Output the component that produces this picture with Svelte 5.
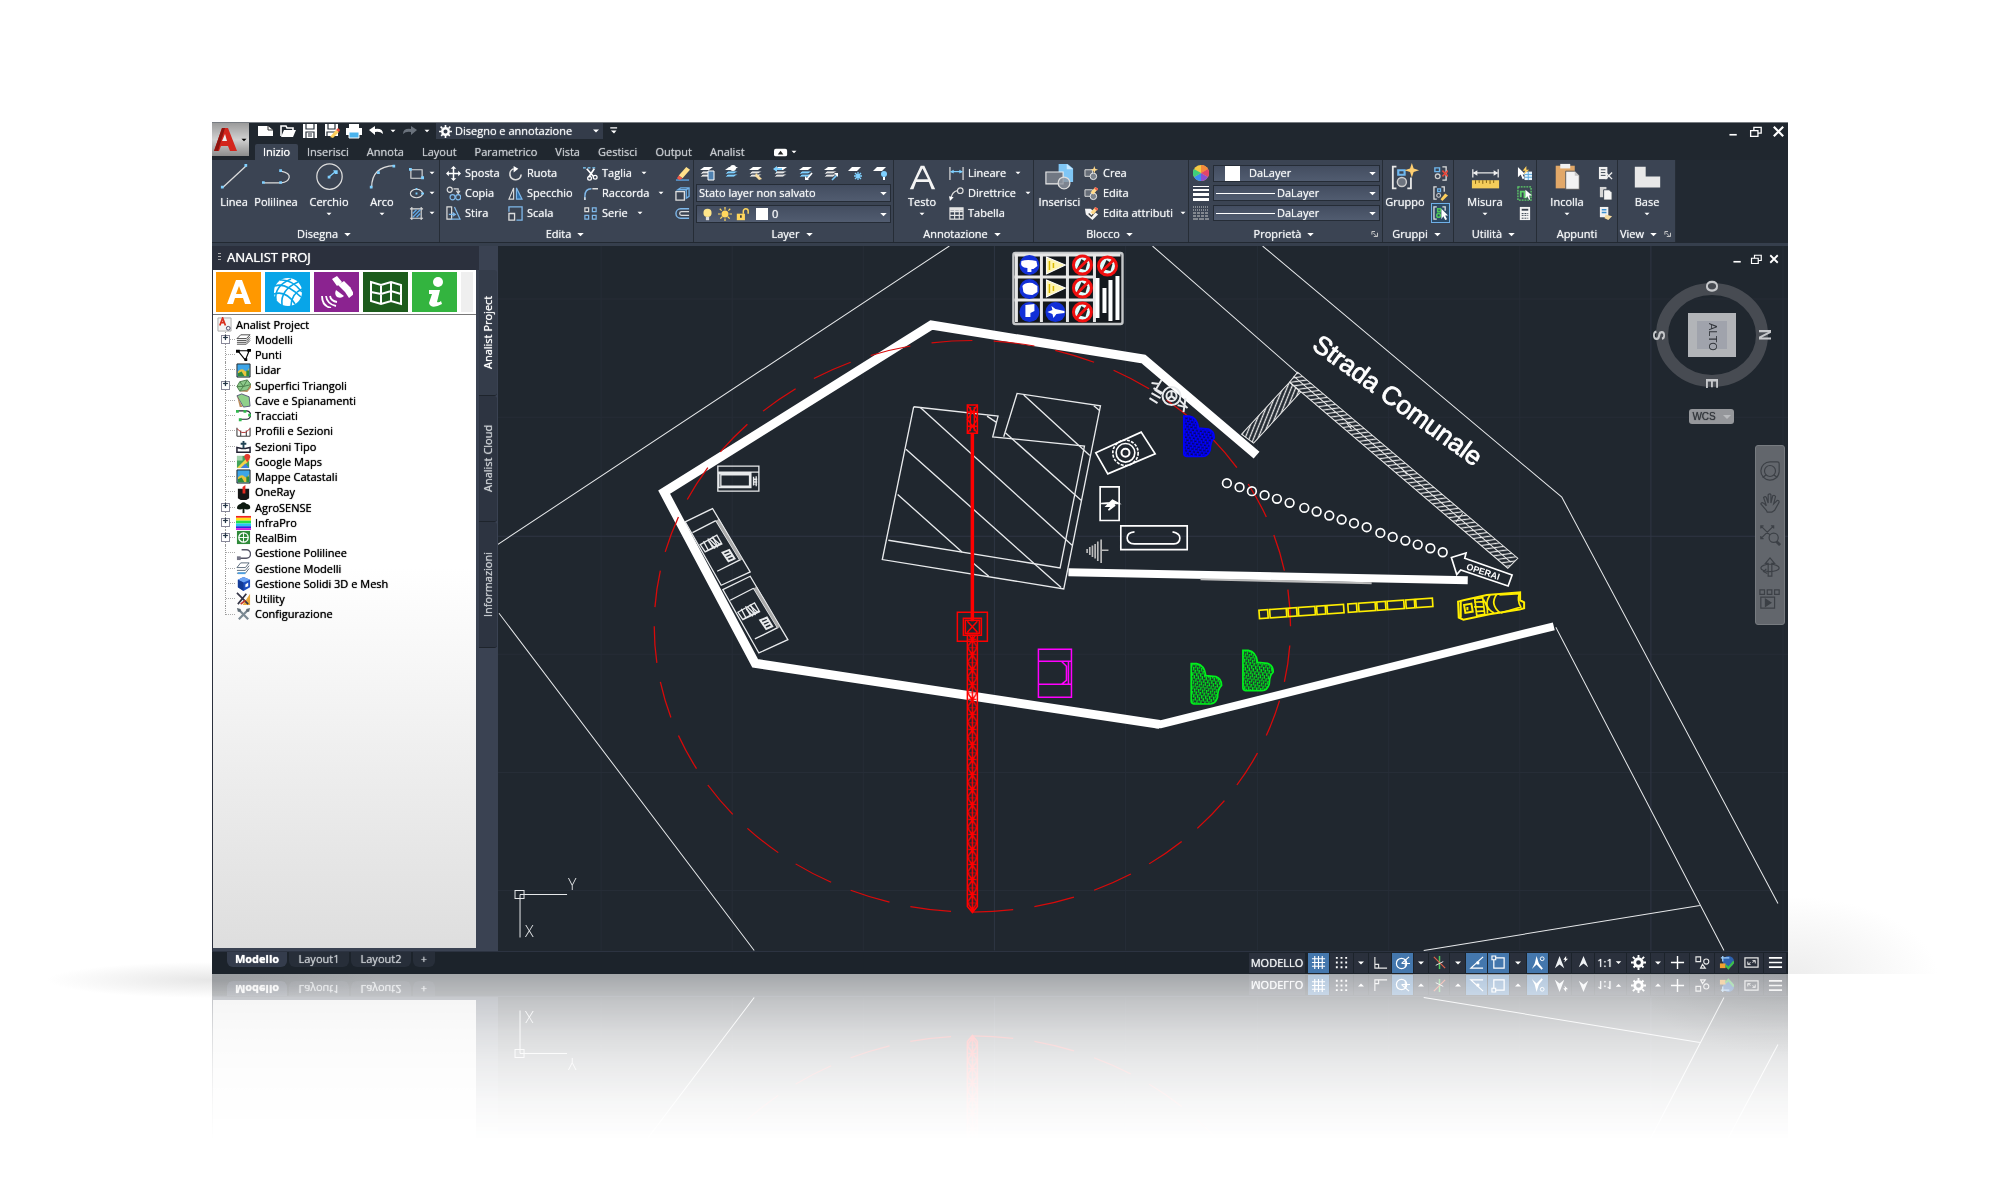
<script lang="ts">
	type Item = { icon: string; label: string; arrow?: boolean };

	const tabs = ['Inizio', 'Inserisci', 'Annota', 'Layout', 'Parametrico', 'Vista', 'Gestisci', 'Output', 'Analist'];

	const quick = ['new', 'open', 'save', 'saveas', 'print', 'undo', 'caret', 'redo', 'caret'];

	const edit: Item[] = [
		{ icon: 'move', label: 'Sposta' },
		{ icon: 'rotate', label: 'Ruota' },
		{ icon: 'trim', label: 'Taglia', arrow: true },
		{ icon: 'erase', label: '' },
		{ icon: 'copy', label: 'Copia' },
		{ icon: 'mirror', label: 'Specchio' },
		{ icon: 'fillet', label: 'Raccorda', arrow: true },
		{ icon: 'explode', label: '' },
		{ icon: 'stretch', label: 'Stira' },
		{ icon: 'scale', label: 'Scala' },
		{ icon: 'array', label: 'Serie', arrow: true },
		{ icon: 'offset', label: '' }
	];

	const annotation: Item[] = [
		{ icon: 'linear', label: 'Lineare', arrow: true },
		{ icon: 'leader', label: 'Direttrice', arrow: true },
		{ icon: 'table', label: 'Tabella' }
	];

	const block: Item[] = [
		{ icon: 'blockNew', label: 'Crea' },
		{ icon: 'blockEdit', label: 'Edita' },
		{ icon: 'blockAttr', label: 'Edita attributi', arrow: true }
	];

	const layerTools = ['layProps', 'layIso', 'layBrush', 'layPrev', 'layA', 'layB', 'layFreeze', 'layOff'];

	const tree = [
		{ icon: 'tModels', label: 'Modelli', plus: true },
		{ icon: 'tPoints', label: 'Punti' },
		{ icon: 'tImage', label: 'Lidar' },
		{ icon: 'tSurface', label: 'Superfici Triangoli', plus: true },
		{ icon: 'tQuarry', label: 'Cave e Spianamenti' },
		{ icon: 'tTrack', label: 'Tracciati' },
		{ icon: 'tProfile', label: 'Profili e Sezioni' },
		{ icon: 'tSection', label: 'Sezioni Tipo' },
		{ icon: 'tMaps', label: 'Google Maps' },
		{ icon: 'tImage', label: 'Mappe Catastali' },
		{ icon: 'tOne', label: 'OneRay' },
		{ icon: 'tTree', label: 'AgroSENSE', plus: true },
		{ icon: 'tInfra', label: 'InfraPro', plus: true },
		{ icon: 'tBim', label: 'RealBim', plus: true },
		{ icon: 'tPoly', label: 'Gestione Polilinee' },
		{ icon: 'tModels2', label: 'Gestione Modelli' },
		{ icon: 'tSolid', label: 'Gestione Solidi 3D e Mesh' },
		{ icon: 'tTools', label: 'Utility' },
		{ icon: 'tConfig', label: 'Configurazione' }
	];

	const paletteTools = [
		{ icon: 'pA', label: 'Analist', tone: 'orange' },
		{ icon: 'pGlobe', label: 'Globo', tone: 'sky' },
		{ icon: 'pSat', label: 'GPS', tone: 'purple' },
		{ icon: 'pMap', label: 'Mappa', tone: 'forest' },
		{ icon: 'pInfo', label: 'Info', tone: 'green' }
	];

	// width in px of each status bar button, "on" marks the lit ones
	const status = [
		{ icon: 'sGrid', w: 21, on: true },
		{ icon: 'sDots', w: 23 },
		{ icon: 'caret', w: 14 },
		{ icon: 'sOrtho', w: 22 },
		{ icon: 'sPolar', w: 21, on: true },
		{ icon: 'caret', w: 14 },
		{ icon: 'sIso', w: 20 },
		{ icon: 'caret', w: 15 },
		{ icon: 'sTrack', w: 21, on: true },
		{ icon: 'sSnap', w: 21, on: true },
		{ icon: 'caret', w: 16 },
		{ icon: 'sAnn1', w: 21, on: true },
		{ icon: 'sAnn2', w: 22 },
		{ icon: 'sAnn3', w: 22 },
		{ icon: 'ratio', w: 31 },
		{ icon: 'gear', w: 23 },
		{ icon: 'caret', w: 13 },
		{ icon: 'sPlus', w: 24 },
		{ icon: 'sShapes', w: 24 },
		{ icon: 'sPerf', w: 23 },
		{ icon: 'sFull', w: 24 },
		{ icon: 'sMenu', w: 22 }
	];

	const cones = [
		[439, 129], [477, 141], [514, 153], [552, 165], [589, 176], [627, 188],
		[671, 203], [708, 214], [746, 226], [783, 238], [820, 249], [858, 261],
		[899, 278], [936, 290], [974, 301], [1011, 313], [1049, 324], [1086, 336]
	];
	const barriers = [
		[536, 26], [568, 50], [623, 26], [654, 50], [709, 26], [740, 50],
		[803, 26], [835, 50], [890, 26], [921, 50], [977, 26], [1007, 50]
	];

	const layers = (a: string, b: string) =>
		`<path d="M5 2h9l-4 3H1z" fill="${a}"/><path d="M4 6h10l-4 3H1zM4 9h10l-4 3H1z" fill="${b}" stroke="#3b4453" stroke-width=".8"/>`;
	const pencil = '<path d="M7 7 12 1l3 2-5 6z" fill="#ffd98a"/><path d="M12 1l3 2-1 2-3-2z" fill="#f05a4a"/>';
	const blk = '<path d="M1 4h8v7H1z" fill="#666d78" stroke="#ddd"/><circle cx="10" cy="11" r="3.5" fill="#7b828c" stroke="#eee"/>';
	const arrowHead = '<path d="M8 1l5 12-5-4-5 4z" fill="#eef1f4"/>';
	const B = '#7fd0ff';

	// inner markup of the icons, on a 16x16 box or 32x32 for the names in size32
	const icons: Record<string, string> = {
		caret: '<path d="M4 6h8l-4 4z" fill="#fff"/>',
		new: '<path d="M0 3h10l5 4v6H0z" fill="#fff"/><path d="M10 3v4h5" fill="none" stroke="#333" />',
		open: '<path d="M1 13V3h5l1 2h6v2" fill="none" stroke="#fff" stroke-width="1.6"/><path d="M4 7h12l-3 7H1z" fill="#fff"/>',
		save: '<path d="M1 1h14v14H1z" fill="#fff"/><path d="M4 1v5h8V1M4 15V9h8v6M6 11h4M6 13h4" fill="none" stroke="#29313a" stroke-width="1.2"/>',
		saveas: '<path d="M1 1h13v12H1z" fill="#fff"/><path d="M4 1v5h7V1M3 13V9h8" fill="none" stroke="#29313a" stroke-width="1.2"/><path d="M6 14 12 7l3 2-6 6z" fill="#ffcf5c"/><path d="M12 7l3 2 1-2-2-2z" fill="#f04a3a"/>',
		print: '<path d="M3 1h10v4H3z" fill="#fff"/><path d="M0 5h16v7H0z" fill="#fff"/><path d="M3 9h10v6H3z" fill="#4bb4ee" stroke="#fff"/>',
		undo: '<path d="M1 7 7 3v3q8-1 8 5-3-3-8-2v3z" fill="#fff"/>',
		redo: '<path d="M15 7 9 3v3Q1 5 1 11q3-3 8-2v3z" fill="#6a727c"/>',
		gear: '<circle cx="8" cy="8" r="4" fill="none" stroke="#fff" stroke-width="3"/><path d="M8 0v16M0 8h16M2 2l12 12M14 2 2 14" stroke="#fff" stroke-width="2" stroke-dasharray="3 10 3 99"/>',
		logo: '<path d="M2 24 10 1h6l9 23h-7l-2-5H9l-2 5z" fill="#d3251c"/><path d="M10 1h3L6 24H2z" fill="#8f140f"/><path d="M10 14h5l-2-7z" fill="#eee"/>',
		line: '<path d="M3 27 29 3" stroke="#ddd" stroke-width="1.4"/><path d="M1 25h3v3H1zM27 1h3v3h-3z" fill="#7fd0ff"/>',
		pline: '<path d="M2 22h19q8-1 9-6t-9-7" fill="none" stroke="#ddd" stroke-width="1.4"/><path d="M0 20h3v3H0zM19 20h3v3h-3zM19 7h3v3h-3z" fill="#7fd0ff"/>',
		circle: '<circle cx="16" cy="15" r="14" fill="none" stroke="#ddd" stroke-width="1.4"/><path d="M16 15l7-6" stroke="#7fd0ff" stroke-width="1.4"/><path d="M14 14h3v3h-3zM20 8h5v4h-3z" fill="#7fd0ff"/>',
		arc: '<path d="M4 27Q4 4 29 3" fill="none" stroke="#ddd" stroke-width="1.4"/><path d="M2 25h3v3H2zM10 9h3v3h-3zM27 2h3v3h-3z" fill="#7fd0ff"/>',
		rect: '<path d="M2 4h12v9H2z" fill="none" stroke="#ddd" stroke-width="1.2"/><path d="M0 2h3v3H0zM13 11h3v3h-3z" fill="#7fd0ff"/>',
		ellipse: '<ellipse cx="8" cy="8" rx="6.500" ry="4.500" fill="none" stroke="#ddd" stroke-width="1.2"/><path d="M7 7h2v2H7zM13 7h3v2h-3zM7 2h2v2H7z" fill="#7fd0ff"/>',
		hatch: '<path d="M3 1v14M13 1v14M1 3h14M1 13h14" stroke="#ddd" stroke-width="1.2"/><path d="M4 8l4-4M4 12l8-8M8 12l4-4" stroke="#5fa8e6" stroke-width="1.5"/>',
		move: '<path d="M8 2v12M2 8h12" stroke="#fff" stroke-width="1.6"/><path d="M8 0l3 3H5zM8 16l3-3H5zM0 8l3-3v6zM16 8l-3-3v6z" fill="#fff"/>',
		rotate: '<path d="M6 3a6 6 0 1 0 8 6" fill="none" stroke="#ddd" stroke-width="1.8"/><path d="M6 0l5 3-5 4z" fill="#fff"/>',
		trim: '<path d="M0 2h15" stroke="#7fd0ff" stroke-width="1.4" stroke-dasharray="3 2"/><path d="M4 3l7 8M12 3 6 12" stroke="#fff" stroke-width="1.8"/><circle cx="7" cy="13" r="2" fill="none" stroke="#fff" stroke-width="1.4"/><circle cx="13" cy="12" r="2" fill="none" stroke="#fff" stroke-width="1.4"/>',
		erase: '<path d="M1 15h14" stroke="#5b9bd5" stroke-width="1.6"/><path d="M4 10 12 1l4 3-8 9z" fill="#ffe08a"/><path d="M4 10l4 3-3 2-3-2z" fill="#f05a4a"/>',
		copy: '<circle cx="4" cy="4" r="2.700" fill="none" stroke="#ddd" stroke-width="1.3"/><circle cx="7" cy="12" r="2.700" fill="none" stroke="#7fb8ea" stroke-width="1.3"/><circle cx="13" cy="12" r="2.700" fill="none" stroke="#7fb8ea" stroke-width="1.3"/><path d="M8 3h5v4M11 5l2 3 2-3" fill="none" stroke="#ddd" stroke-width="1.2"/>',
		mirror: '<path d="M6 2v12H1z" fill="none" stroke="#ddd" stroke-width="1.2"/><path d="M9 2v12h6z" fill="#2d6eaa" stroke="#7fb8ea" stroke-width="1.2"/>',
		fillet: '<path d="M2 15V11Q2 3 9 3" fill="none" stroke="#7fb8ea" stroke-width="1.5"/><path d="M2 15v-3M10 3h6" stroke="#ddd" stroke-width="1.5"/>',
		explode: '<path d="M1 6h9v9H1z" fill="none" stroke="#ddd" stroke-width="1.4"/><path d="M3 4l3-2h9v9l-3 2V4zM12 4l3-2" fill="none" stroke="#6fb0e8" stroke-width="1.4"/>',
		stretch: '<path d="M1 1h5v13H1z" fill="none" stroke="#ddd" stroke-width="1.3"/><path d="M9 1l6 13H5M3 9h6M7 7l3 2-3 2" fill="none" stroke="#7fb8ea" stroke-width="1.3"/>',
		scale: '<path d="M1 6V1h14v14H9" fill="none" stroke="#7fb8ea" stroke-width="1.4"/><path d="M1 8h6v7H1z" fill="none" stroke="#ddd" stroke-width="1.4"/>',
		array: '<path d="M2 2h4v4H2z" fill="none" stroke="#ddd" stroke-width="1.3"/><path d="M10 2h4v4h-4zM2 10h4v4H2zM10 10h4v4h-4z" fill="none" stroke="#7fb8ea" stroke-width="1.3"/>',
		offset: '<path d="M15 3H6a5 5 0 0 0 0 10h9" fill="none" stroke="#7fb8ea" stroke-width="1.5"/><path d="M15 6H7a2 2 0 0 0 0 4h8" fill="none" stroke="#ddd" stroke-width="1.3"/>',
		layProps: layers('#fff', '#e4e4e4') + '<path d="M9 6h6v9H9z" fill="#4f81b0" stroke="#fff"/>',
		layIso: layers('#fff', B) + '<circle cx="9" cy="3" r="3" fill="#fff"/>',
		layBrush: layers('#fff', '#e4e4e4') + '<path d="M8 8l6 6-3 1-4-4z" fill="#f7dca0"/>',
		layPrev: layers('#fff', '#e4e4e4') + '<path d="M0 4l4-3v2h5v2H4v2z" fill="#7fd0ff"/>',
		layA: layers('#fff', B) + '<path d="M14 8l-5 6" stroke="#fff" stroke-width="1.6"/><path d="M7 15v-4l4 4z" fill="#fff"/>',
		layB: layers('#fff', '#e4e4e4') + '<path d="M9 15l5-5" stroke="#7fd0ff" stroke-width="1.6"/><path d="M15 8v4l-4-4z" fill="#fff"/>',
		layFreeze: '<path d="M5 2h9l-4 4H1z" fill="#fff"/><path d="M11 7v8M7 11h8M8 8l6 6M14 8l-6 6" stroke="#7fd0ff" stroke-width="1.3"/>',
		layOff: '<path d="M5 2h9l-4 4H1z" fill="#fff"/><circle cx="12" cy="9" r="3" fill="#7fd0ff"/><path d="M11 12h2v3h-2z" fill="#fff"/>',
		bulb: '<circle cx="8" cy="6" r="5" fill="#ffe68a"/><path d="M6 11h4v4H6z" fill="#ddd"/>',
		sun: '<circle cx="8" cy="8" r="4" fill="#ffd75e"/><path d="M8 0v16M0 8h16M2 2l12 12M14 2 2 14" stroke="#ffd75e" stroke-width="1.4" stroke-dasharray="3 10 3 99"/>',
		lock: '<path d="M1 7h10v8H1z" fill="#ffd75e"/><path d="M9 7V4a3 3 0 0 1 6 0v3" fill="none" stroke="#ffd75e" stroke-width="1.8"/><path d="M5 9h2v3H5z" fill="#333"/>',
		text: '<path d="M2 29 14 3h4l12 26h-4l-3-8H9l-3 8zM10 18h12L16 6z" fill="#f4f4f4" fill-rule="evenodd"/>',
		linear: '<path d="M1 1v14M15 1v14" stroke="#ddd" stroke-width="1.3"/><path d="M2 6h12" stroke="#7fd0ff" stroke-width="1.3"/><path d="M1 6l4-2v4zM15 6l-4-2v4z" fill="#7fd0ff"/>',
		leader: '<path d="M2 14Q3 6 9 5" fill="none" stroke="#ddd" stroke-width="1.3"/><circle cx="12" cy="5" r="3" fill="none" stroke="#ddd" stroke-width="1.3"/><path d="M0 11l5 1-4 4z" fill="#fff"/>',
		table: '<path d="M1 2h14v12H1zM1 6h14M1 10h14M6 4v10M11 4v10" fill="none" stroke="#e4e4e4" stroke-width="1.2"/><path d="M1 2h14v3H1z" fill="#e4e4e4"/>',
		insert: '<path d="M15 1h10l6 5v15H15z" fill="#7fc6f5"/><path d="M24 1v6h7" fill="#c8e8ff"/><path d="M1 10h19v13H1z" fill="#717883" stroke="#eee" stroke-width="1.2"/><circle cx="21" cy="22" r="6.500" fill="#8f95a0" fill-opacity=".8" stroke="#ddd" stroke-width="1.4"/>',
		blockNew: blk + '<path d="M11 0l1 3 3 1-3 1-1 3-1-3-3-1 3-1z" fill="#ffd98a"/>',
		blockEdit: blk + pencil,
		blockAttr: '<path d="M1 3h6l8 6-6 6-7-6z" fill="#f4f4f4"/><path d="M5 8l3 3 4-5" fill="none" stroke="#444" stroke-width="1.4"/>' + pencil,
		wheel: '<circle cx="8" cy="8" r="8" fill="#f6c944"/><path d="M8 8V0a8 8 0 0 1 7 4z" fill="#f58a3c"/><path d="M8 8 15 4a8 8 0 0 1 0 8z" fill="#e2456b"/><path d="M8 8l7 4a8 8 0 0 1-7 4z" fill="#8b4fd0"/><path d="M8 8v8a8 8 0 0 1-7-4z" fill="#3a8df0"/><path d="M8 8 1 12a8 8 0 0 1 0-8z" fill="#3ecf7a"/>',
		weights: '<path d="M0 1h16v1H0zM0 4h16v2H0zM0 8h16v3H0zM0 13h16v3H0z" fill="#fff"/>',
		ltypes: '<path d="M0 2h16M0 5h16" stroke="#ccc" stroke-dasharray="1 1"/><path d="M0 8h16M0 11h16" stroke="#ccc" stroke-dasharray="3 1"/><path d="M0 14h16" stroke="#ccc" stroke-dasharray="5 1"/>',
		group: '<path d="M6 4H2v24h4M18 28h4V16" fill="none" stroke="#e8e8e8" stroke-width="2"/><path d="M8 8h7v5H8z" fill="none" stroke="#6fb7ee" stroke-width="2.400"/><circle cx="12" cy="21" r="5" fill="#6d747f" stroke="#ccc" stroke-width="1.6"/><path d="M23 0l2 6 6 2-6 2-2 6-2-6-6-2 6-2z" fill="#ffcf70"/>',
		ungroup: '<path d="M10 1h4v14h-4" fill="none" stroke="#ddd" stroke-width="1.4"/><path d="M2 2h5v4H2z" fill="none" stroke="#6fb7ee" stroke-width="1.5"/><circle cx="5" cy="11" r="2.500" fill="none" stroke="#ccc" stroke-width="1.4"/><path d="M10 5l6 6M16 5l-6 6" stroke="#e5483c" stroke-width="1.8"/>',
		groupEdit: '<path d="M4 1H1v13h3M9 1h3v5" fill="none" stroke="#ddd" stroke-width="1.4"/><path d="M5 3h3v3H5z" fill="none" stroke="#6fb7ee" stroke-width="1.4"/><circle cx="6" cy="10" r="2" fill="none" stroke="#ccc" stroke-width="1.2"/><path d="M8 14l5-6 3 2-6 6z" fill="#ffcf5c"/>',
		groupSel: '<path d="M4 1H1v13h3M10 1h3v4" fill="none" stroke="#ddd" stroke-width="1.4"/><path d="M5 3h3v3H5z" fill="none" stroke="#4fc65c" stroke-width="1.6"/><circle cx="6" cy="10" r="2" fill="none" stroke="#4fc65c" stroke-width="1.6"/><path d="M9 3v11l2-3 2 4 2-1-2-4h3z" fill="#fff"/>',
		measure: '<path d="M2 7v9M30 7v9M3 11h26" stroke="#e8e8e8" stroke-width="1.4"/><path d="M2 11l5-3v6zM30 11l-5-3v6z" fill="#eee"/><path d="M1 19h30v9H1z" fill="#f5cd5a"/><path d="M5 19v4M9 19v3M13 19v4M17 19v3M21 19v4M25 19v3" stroke="#7a5a10"/>',
		quickSel: '<path d="M1 1v11l3-3 2 5 2-1-2-4h3z" fill="#fff"/><path d="M8 6h8v9H8z" fill="#e6f3fc"/><path d="M8 9h8M8 12h8M12 6v9" stroke="#58a6dc"/><path d="M10 0 6 5h3l-2 4 6-5h-3z" fill="#ffcf5c"/>',
		selAll: '<path d="M1 1h14v14H1z" fill="none" stroke="#5fd06a" stroke-width="1.4" stroke-dasharray="2 1"/><path d="M4 12V6h4v6h3" fill="none" stroke="#5fd06a" stroke-width="2"/><path d="M9 4v9l2-2 2 4 1-1-1-4h3z" fill="#fff"/>',
		calc: '<path d="M3 1h11v14H3z" fill="#f2f2f2"/><path d="M5 3h7v2H5z" fill="#39424e"/><path d="M5 8h7M5 10h7M5 13h7" stroke="#39424e" stroke-dasharray="2 1"/>',
		paste: '<path d="M3 3h21v25H3z" fill="#e2a868"/><path d="M8 1h11v5H8z" fill="#f1f1f1"/><path d="M14 9h10l5 5v15H14z" fill="#f3f3f3" stroke="#555" /><path d="M24 9v5h5" fill="#c6c6c6"/>',
		cut: '<path d="M1 1h9v13H1z" fill="#f1f1f1"/><path d="M3 4h5M3 7h5M3 10h5" stroke="#39424e"/><path d="M8 7l7 7M15 7l-7 7" stroke="#eee" stroke-width="1.5"/>',
		copyClip: '<path d="M2 1h7v11H2z" fill="#d5d5d5"/><path d="M6 4h6l3 3v8H6z" fill="#f5f5f5" stroke="#39424e"/>',
		match: '<path d="M2 1h9v11H2z" fill="#f1f1f1"/><path d="M4 4h5M4 7h5" stroke="#3a8fd0" stroke-width="1.6"/><path d="M8 9l7 2-4 4-4-2z" fill="#f7dca0"/>',
		base: '<path d="M2 4h12v11h16v12H2z" fill="#e8e8e8"/>',
		launcher: '<path d="M3 4h5M3 4v5M5 6l6 6M12 6v6H6" fill="none" stroke="#ccc" stroke-width="1.5"/>',
		tRoot: '<path d="M1 1h14v14H1z" fill="#f4f4f4" stroke="#aaa"/><path d="M3 9 6 1l3 8M4 6h4" fill="none" stroke="#d9301f" stroke-width="1.8"/><circle cx="12" cy="12" r="2" fill="none" stroke="#446"/>',
		tModels: '<path d="M5 3h10l-4 4H1zM1 9h10l4-4M1 11h10l4-4M1 13h10l4-4" fill="none" stroke="#444"/>',
		tModels2: '<path d="M5 2h9l-4 5H1zM1 10h9l4-5M1 13h9l4-5" fill="none" stroke="#567"/><path d="M2 13h8" stroke="#4b9fe0" stroke-width="2"/>',
		tPoints: '<path d="M2 4h12l-4 10z" fill="none" stroke="#000" stroke-width="1.2"/><path d="M0 3h4v3H0zM12 2h4v3h-4zM9 12h3v3H9z"/>',
		tImage: '<path d="M1 1h14v14H1z" fill="#3da5e8" stroke="#222"/><path d="M2 9q4-4 7-1t5-3v9H2z" fill="#e8c440"/><path d="M2 11l4-2 3 5H2zM11 8h3v6h-3z" fill="#2f8a3a"/>',
		tSurface: '<path d="M1 9 4 4l8-2 4 5-4 6-8 1z" fill="#8cc98a" stroke="#4b7d4a"/><path d="M4 4l4 5 4-7M1 9h7l8-2M8 9l-4 5" fill="none" stroke="#4b7d4a"/><path d="M4 14l8-1 4-6v3l-4 5z" fill="#b98b5a"/>',
		tQuarry: '<path d="M1 3l5-2 8 3 1 10-7 1z" fill="#8fd08a" stroke="#557"/><path d="M1 3l6 12H4z" fill="#b98b5a"/>',
		tTrack: '<path d="M1 3h10a4 4 0 0 1 0 9H4" fill="none" stroke="#223" stroke-width="1.3"/><path d="M0 2h3v3H0zM8 2h3v3H8zM13 6h3v3h-3zM3 11h3v3H3z" fill="#2fb84c"/>',
		tProfile: '<path d="M1 4v9M5 7v6M11 7v6M15 4v9M1 13h14" stroke="#444" stroke-width="1.2"/><path d="M1 5l5 4h4l5-4" fill="none" stroke="#b03030"/>',
		tSection: '<path d="M1 9l5 1h4l5-1v5H1z" fill="none" stroke="#223" stroke-width="1.6"/><path d="M8 2v8M5 5h6" stroke="#245" stroke-width="2"/>',
		tMaps: '<path d="M1 2h13v13H1z" fill="#42a45a"/><path d="M1 15 13 3l2 3-9 9z" fill="#f4d34a"/><path d="M5 15l5-5 4 5z" fill="#3f7fe0"/><path d="M12 0a3 3 0 0 1 3 4l-3 5-3-5a3 3 0 0 1 3-4z" fill="#e33b2e"/><path d="M1 2h6v5H1z" fill="#fff" fill-opacity=".5"/>',
		tOne: '<path d="M2 4h12v10l-3 2H5l-3-2z" fill="#151515"/><path d="M7 2l3-2v9H7z" fill="#e3281e"/>',
		tTree: '<path d="M1 9q0-4 4-5 3-3 6 0 5 1 4 5-3 2-7 0-4 2-7 0z" fill="#0d1a10"/><path d="M7 8h2v6H7z" fill="#0d1a10"/>',
		tInfra: '<path d="M0 1h16v2H0z" fill="#f02020"/><path d="M0 3h16v3H0z" fill="#ffe11a"/><path d="M0 6h16v3H0z" fill="#24e04a"/><path d="M0 9h16v3H0z" fill="#24c8f0"/><path d="M0 12h16v2H0z" fill="#2030e0"/><path d="M0 14h16v2H0z" fill="#d020e0"/>',
		tBim: '<path d="M1 1h14v14H1z" fill="#2f8a3a"/><circle cx="8" cy="8" r="5" fill="none" stroke="#fff" stroke-width="1.4"/><path d="M3 8h10M8 3v10" stroke="#fff"/>',
		tPoly: '<path d="M3 13h8a4 4 0 0 0 0-9H6" fill="none" stroke="#556" stroke-width="1.5"/><path d="M1 11h4v4H1z" fill="#778"/>',
		tSolid: '<path d="M2 4l6-3 7 3v8l-7 4-6-4z" fill="#1d4fc0"/><path d="M2 4l6 3 7-3-7-3z" fill="#6da4f4"/><path d="M8 7v9l-6-4V4z" fill="#123a96"/><path d="M10 9l3-2v4l-3 1z" fill="#fff"/>',
		tTools: '<path d="M7 15 15 3v12z" fill="#e7a83a"/><path d="M1 2l12 12M2 14 11 3" stroke="#334" stroke-width="1.8"/><path d="M5 14l5-4" stroke="#c83a2a" stroke-width="2"/>',
		tConfig: '<path d="M3 3l10 10M13 3 3 13" stroke="#7c8a94" stroke-width="2.400"/><path d="M1 1l4 1v3H2zM15 1l-4 1v3h3z" fill="#5f6c76"/>',
		pA: '<path d="M4 28 13 4h6l9 24h-6l-2-6h-8l-2 6zM13 18h6l-3-8z" fill="#fff" fill-rule="evenodd"/>',
		pGlobe: '<circle cx="16" cy="16" r="14" fill="#fff"/><g fill="none" stroke="#08a5e8" stroke-width="1.6"><path d="M3 10q10-4 26 11M2 18q12-4 21 10M8 4q12-1 22 12"/><path d="M10 29Q8 14 26 6M4 24Q2 10 19 3M19 30q0-12 11-17"/></g>',
		pSat: '<g fill="#fff"><path d="M11 3l5-3 5 6-5 4zM26 15l4-4M24 16l5-5 4 7-5 4zM17 9l6-4 7 7-5 5z"/><path d="M15 14q-2 4 1 7 4 2 7-1z"/></g><path d="M9 20q1 5 7 6M5 20q1 8 10 10M1 20q0 10 9 12" fill="none" stroke="#fff" stroke-width="1.8"/>',
		pMap: '<path d="M1 6l10 3 10-3 10 3v19l-10-3-10 3-10-3zM11 9v19M21 6v19M1 16l10 2 10-3 10 3" fill="none" stroke="#fff" stroke-width="2"/>',
		pInfo: '<circle cx="19" cy="6" r="5" fill="#fff"/><path d="M10 14h11l-3 12q2 1 4-1l1 3q-11 6-13-1l3-9h-3z" fill="#fff"/>',
		sGrid: '<path d="M4 1v14M8 1v14M12 1v14M1 4h14M1 8h14M1 12h14" stroke="#fff" stroke-width="1.2"/>',
		sDots: '<path d="M2 3h13M2 8h13M2 13h13" stroke="#fff" stroke-width="2" stroke-dasharray="2 3"/>',
		sOrtho: '<path d="M2 2v12h13M2 10h4v4" fill="none" stroke="#e8e8e8" stroke-width="1.2"/>',
		sPolar: '<circle cx="7" cy="9" r="5.500" fill="none" stroke="#fff" stroke-width="1.3"/><path d="M7 9h9M7 9l8-7M11 5v8" fill="none" stroke="#fff" stroke-width="1.2"/>',
		sIso: '<path d="M8 1v14" stroke="#4fc65c" stroke-width="1.6"/><path d="M2 2l12 12" stroke="#e0604a" stroke-width="1.4"/><path d="M4 11l8-4" stroke="#e8e8e8"/>',
		sTrack: '<path d="M15 2 2 14h13" fill="none" stroke="#fff" stroke-width="1.3"/><path d="M8 7h3v3H8z" fill="#fff"/>',
		sSnap: '<path d="M3 3h11v11H3z" fill="none" stroke="#fff" stroke-width="1.3"/><path d="M1 1h4v4H1z" fill="#4877aa" stroke="#fff" stroke-width="1.2"/>',
		sAnn1: '<path d="M7 1l4 13-4-4-5 5 3-6z" fill="#fff"/><circle cx="13" cy="4" r="2" fill="none" stroke="#fff"/><path d="M8 9l5 6" stroke="#fff" stroke-width="2"/>',
		sAnn2: '<path d="M7 1l5 13-5-4-5 4z" fill="#eef1f4"/><path d="M14 1l-3 4h2l-1 3 4-4h-2z" fill="#fff"/>',
		sAnn3: arrowHead,
		sPlus: '<path d="M8 1v14M1 8h14" stroke="#fff" stroke-width="1.5"/>',
		sShapes: '<path d="M1 2h5v5H1zM6 14l2-4 3 4z" fill="none" stroke="#e8e8e8" stroke-width="1.2"/><circle cx="12" cy="7" r="2.700" fill="none" stroke="#e8e8e8" stroke-width="1.2"/>',
		sPerf: '<circle cx="10" cy="7" r="6" fill="#2d62b0"/><path d="M2 3h9M4 1v6" stroke="#9fd0ff" stroke-width="1.4"/><path d="M1 9h6v5H1z" fill="#f0a030"/><path d="M7 11l3 3 6-7" fill="none" stroke="#3fbf4a" stroke-width="2.400"/>',
		sFull: '<path d="M1 3h14v10H1z" fill="none" stroke="#e8e8e8" stroke-width="1.3"/><path d="M9 6h3v3M7 10H4V7M12 6l-3 2M4 10l3-2" fill="none" stroke="#e8e8e8"/>',
		sMenu: '<path d="M1 3h14M1 8h14M1 13h14" stroke="#fff" stroke-width="1.8"/>',
		min: '<path d="M3 11h9v2H3z" fill="#fff"/>',
		restore: '<path d="M6 3h9v7H6z" fill="none" stroke="#fff" stroke-width="1.6"/><path d="M2 7h9v7H2z" fill="#20272f" stroke="#fff" stroke-width="1.6"/>',
		close: '<path d="M3 3l10 10M13 3 3 13" stroke="#fff" stroke-width="2.400"/>',
		flyout: '<rect y="4" width="14" height="8" rx="2" fill="#fff"/><path d="M4 10l3-4 3 4z" fill="#222"/>',
		custom: '<path d="M2 3h11" stroke="#fff" stroke-width="2"/><path d="M3 7h9l-4 5z" fill="#fff"/>',
		nWheel: '<path d="M12 2h8q2 0 2 2v9a10 10 0 1 1-10-11z"/><circle cx="12" cy="12" r="6"/><path d="M4 19l4-3M20 19l-4-3"/>',
		nHand: '<path d="M8 20 2 13q1-3 4 0l2 2L5 6q2-2 3 0l2 6V3q2-2 3 0v9l2-8q2-1 3 1l-2 8 4-4q2 0 2 2l-5 9-3 2H9z"/>',
		nZoom: '<path d="M2 2l14 14M16 2 2 16M2 5V2h3M13 2h3v3M2 13v3h3"/><circle cx="16" cy="15" r="5" fill="#62666c"/><path d="M19 19l4 4" stroke-width="3"/>',
		nOrbit: '<path d="M10 22V8H7l5-6 5 6h-3v14z"/><ellipse cx="12" cy="13" rx="10" ry="4"/><path d="M8 14l-3 3 4 2"/>',
		nShow: '<path d="M1 2h5v5H1zM9 2h5v5H9zM17 2h5v5h-5zM2 10h15v12H2z"/><path d="M7 12v8l6-4z" fill="#3c4046"/>'
	};

	const size32 = ['line', 'pline', 'circle', 'arc', 'text', 'insert', 'group', 'measure', 'paste', 'base', 'pA', 'pGlobe', 'pSat', 'pMap', 'pInfo'];
	const box = (name: string) => (size32.includes(name) ? 32 : 16);
</script>

{#snippet icon(name: string, px = 14)}
	<svg width={px} height={px} viewBox="0 0 {box(name)} {box(name)}" aria-hidden="true">{@html icons[name]}</svg>
{/snippet}

{#snippet big(name: string, label: string, arrow = false)}
	<button class="big">
		{@render icon(name, 29)}
		<span>{label}</span>
		{#if arrow}{@render icon('caret', 10)}{/if}
	</button>
{/snippet}

{#snippet small(item: Item)}
	<button class="small" aria-label={item.label || item.icon}>
		{@render icon(item.icon, 15)}
		{#if item.label}<span>{item.label}</span>{/if}
		{#if item.arrow}<span class="drop">{@render icon('caret', 10)}</span>{/if}
	</button>
{/snippet}

{#snippet bush(x: number, y: number, kind: string)}
	<path
		class="bush {kind}"
		transform="translate({x} {y})"
		fill="url(#leaf-{kind})"
		d="M0 0h16q24 4 28 36l30 3q17 6 17 26-12 12-12 36-6 20-22 20H8q-8-2-8-8z"
	/>
{/snippet}

{#snippet container(x: number, y: number)}
	<g transform="translate({x} {y})">
		<path d="M0 40 82 0l113 190-87 40z" />
		<path d="M22 72l70-36M92 36l72 118-68 34M100 32l70 120" />
		<path d="M96 34l72 120" stroke="#aaa" stroke-width="8" />
		<path d="M45 108l50-28 15 26-50 24zM62 128l46-24M55 98l15 28M68 90l15 28M82 84l14 27" />
		<path d="M74 92l24 24M80 86l24 22M70 98l20 22" />
		<path d="M112 132l20-8 16 26-18 8zM120 140l18-8M126 148l18-8" stroke-width="6" />
	</g>
{/snippet}

<main>
	<div class="window">
		<header>
			<button class="logo" aria-label="Menu applicazione">
				<svg width="27" height="25" viewBox="0 0 27 25" aria-hidden="true">{@html icons.logo}</svg>
				{@render icon('caret', 10)}
			</button>
			<div class="bars">
				<div class="quickbar">
					{#each quick as q}
						<button class={q} aria-label={q}>{@render icon(q, q === 'caret' ? 10 : 16)}</button>
					{/each}
					<label class="workspace">
						{@render icon('gear', 13)}
						<select aria-label="Area di lavoro"><option>Disegno e annotazione</option></select>
						{@render icon('caret', 12)}
					</label>
					<button aria-label="Personalizza">{@render icon('custom', 10)}</button>
					<span class="winctl">
						<button aria-label="Riduci">{@render icon('min', 13)}</button>
						<button aria-label="Ripristina">{@render icon('restore', 13)}</button>
						<button aria-label="Chiudi">{@render icon('close', 15)}</button>
					</span>
				</div>
				<nav>
					{#each tabs as t, i}
						<button class:active={i === 0}>{t}</button>
					{/each}
					<button class="flyout" aria-label="Riduci barra">{@render icon('flyout', 15)}{@render icon('caret', 10)}</button>
				</nav>
			</div>
		</header>

		<div class="ribbon">
			<section class="w-draw">
				<div class="body">
					{@render big('line', 'Linea')}
					{@render big('pline', 'Polilinea')}
					{@render big('circle', 'Cerchio', true)}
					{@render big('arc', 'Arco', true)}
					<div class="minis">
						{#each ['rect', 'ellipse', 'hatch'] as n}
							<button aria-label={n}>{@render icon(n, 15)}{@render icon('caret', 10)}</button>
						{/each}
					</div>
				</div>
				<h2>Disegna {@render icon('caret', 13)}</h2>
			</section>

			<section class="w-edit">
				<div class="body edit">
					{#each edit as item}{@render small(item)}{/each}
				</div>
				<h2>Edita {@render icon('caret', 13)}</h2>
			</section>

			<section class="w-layer">
				<div class="body stack">
					<div class="tools">
						{#each layerTools as n}<button aria-label={n}>{@render icon(n, 16)}</button>{/each}
					</div>
					<label class="combo">
						<select aria-label="Stato layer"><option>Stato layer non salvato</option></select>
						{@render icon('caret', 13)}
					</label>
					<label class="combo lay">
						{@render icon('bulb', 13)}{@render icon('sun', 14)}{@render icon('lock', 13)}
						<i class="swatch"></i>
						<select aria-label="Layer"><option>0</option></select>
						{@render icon('caret', 13)}
					</label>
				</div>
				<h2>Layer {@render icon('caret', 13)}</h2>
			</section>

			<section class="w-annot">
				<div class="body">
					{@render big('text', 'Testo', true)}
					<div class="col">{#each annotation as item}{@render small(item)}{/each}</div>
				</div>
				<h2>Annotazione {@render icon('caret', 13)}</h2>
			</section>

			<section class="w-block">
				<div class="body">
					{@render big('insert', 'Inserisci')}
					<div class="col">{#each block as item}{@render small(item)}{/each}</div>
				</div>
				<h2>Blocco {@render icon('caret', 13)}</h2>
			</section>

			<section class="w-props">
				<div class="body stack">
					<div class="prop">
						{@render icon('wheel', 16)}
						<label class="combo">
							<i class="swatch wide"></i>
							<select aria-label="Colore"><option>DaLayer</option></select>
							{@render icon('caret', 13)}
						</label>
					</div>
					{#each ['weights', 'ltypes'] as n}
						<div class="prop">
							{@render icon(n, 16)}
							<label class="combo">
								<i class="rule"></i>
								<select aria-label={n}><option>DaLayer</option></select>
								{@render icon('caret', 13)}
							</label>
						</div>
					{/each}
				</div>
				<h2>Proprietà {@render icon('caret', 13)}<span class="launcher">{@render icon('launcher', 10)}</span></h2>
			</section>

			<section class="w-group">
				<div class="body">
					{@render big('group', 'Gruppo')}
					<div class="minis">
						<button aria-label="Separa">{@render icon('ungroup', 15)}</button>
						<button aria-label="Modifica gruppo">{@render icon('groupEdit', 15)}</button>
						<button class="lit" aria-label="Selezione gruppo">{@render icon('groupSel', 15)}</button>
					</div>
				</div>
				<h2>Gruppi {@render icon('caret', 13)}</h2>
			</section>

			<section class="w-util">
				<div class="body">
					{@render big('measure', 'Misura', true)}
					<div class="minis">
						{#each ['quickSel', 'selAll', 'calc'] as n}<button aria-label={n}>{@render icon(n, 15)}</button>{/each}
					</div>
				</div>
				<h2>Utilità {@render icon('caret', 13)}</h2>
			</section>

			<section class="w-clip">
				<div class="body">
					{@render big('paste', 'Incolla', true)}
					<div class="minis">
						{#each ['cut', 'copyClip', 'match'] as n}<button aria-label={n}>{@render icon(n, 15)}</button>{/each}
					</div>
				</div>
				<h2>Appunti</h2>
			</section>

			<section class="w-view">
				<div class="body">{@render big('base', 'Base', true)}</div>
				<h2>View {@render icon('caret', 13)}{@render icon('launcher', 10)}</h2>
			</section>
		</div>

		<div class="work">
			<aside>
				<h1>ANALIST PROJ</h1>
				<div class="palette">
					{#each paletteTools as p}
						<button class={p.tone} aria-label={p.label}>{@render icon(p.icon, 32)}</button>
					{/each}
					<span class="rest"></span>
				</div>
				<ul>
					<li class="root">{@render icon('tRoot', 15)}Analist Project</li>
					{#each tree as node}
						<li>
							<span class="branch">{#if node.plus}<i class="plus">+</i>{/if}</span>
							{@render icon(node.icon, 15)}{node.label}
						</li>
					{/each}
				</ul>
			</aside>
			<div class="sidetabs">
				<button>Analist Project</button>
				<button>Analist Cloud</button>
				<button>Informazioni</button>
			</div>

			<div class="canvas">
				<svg class="drawing" viewBox="498 246 1289 704" role="img" aria-label="Planimetria di cantiere">
					<defs>
						<pattern id="leaf-green" width="12" height="16" patternUnits="userSpaceOnUse" patternTransform="rotate(8)">
							<path d="M3 0v12M9 8v8M9 0v4" stroke="#00e81c" stroke-width="4" />
						</pattern>
						<pattern id="leaf-blue" width="12" height="16" patternUnits="userSpaceOnUse" patternTransform="rotate(8)">
							<rect width="12" height="16" fill="#07075a" />
							<path d="M3 0v12M9 8v8M9 0v4" stroke="#0000ff" stroke-width="5" />
						</pattern>
						<pattern id="strip" width="6" height="4" patternUnits="userSpaceOnUse" patternTransform="rotate(-8)">
							<path d="M0 2h6" stroke="#e8e8e8" stroke-width="1.2" />
						</pattern>
						<pattern id="strip-steep" width="4" height="6" patternUnits="userSpaceOnUse" patternTransform="rotate(22)">
							<path d="M2 0v6" stroke="#e8e8e8" stroke-width="1.3" />
						</pattern>
						<pattern id="lattice" x="967" y="632" width="10" height="15" patternUnits="userSpaceOnUse">
							<path d="M0 0l10 15M10 0 0 15M5 0v15M0 0h10M1 7h8" stroke="#ff0000" stroke-width="1.5" fill="none" />
						</pattern>
					</defs>

					<g class="grid">
						<path d="M601 246v704M732 246v704M863 246v704M1125 246v704M1257 246v704M1388 246v704M1519 246v704M1782 246v704" />
						<path d="M498 299h1289M498 417h1289M498 654h1289M498 772h1289M498 890h1289" />
						<path class="major" d="M994 246v704M1650 246v704M498 536h1289" />
					</g>

					<g class="thin">
						<path d="M949 246 498 544M499 613l255 337M1152 246l145 127M1262 246l299 251 216 406M1555 627l142 273 26 50M1423 950l276-45" />
					</g>

					<g class="wall">
						<path d="M1256 455 1143 359 931 325 664 492l91 171 404 61" stroke-width="9" />
						<path d="M1155 724l5 0 393-98" stroke-width="8" />
						<path d="M1068 572l399 8" stroke-width="8" />
						<path d="M1200 579l171 4" stroke-width="2" stroke="#bbb" />
					</g>

					<!-- crane reach -->
					<g transform="translate(972 626) scale(1 .898)" class="reach">
						<path d="M0 318A318 318 0 0 0 0-318 318 318 0 0 0 0 318" stroke-dasharray="41 21.4" />
					</g>

					<!-- building -->
					<g transform="translate(640 300) scale(.33333)" class="cad">
						<path d="M820 320l253 28-16 62 275 28-73 365-515-83M1090 410l40-130 250 37-110 549-544-88 94-458" />
						<path d="M840 322l455 413M797 447l465 415M772 583l193 172M1000 790l45 38M1040 348l27 18M1150 285l198 181M1095 398l227 202M1360 317l18 15" />
						<path d="M233 498h123v75H233zM233 516h123M242 524h86v34h-86zM236 520h96v42h-96zM340 530v26M348 528v30" />
						<path d="M345 535v18" stroke-width="12" stroke-dasharray="5 3" />
						{@render container(135, 625)}
						{@render container(248, 828)}
					</g>

					<g transform="translate(1080 440) scale(.33333)" class="cad bold">
						<!-- plant and equipment -->
						<path d="M46 38 182-24l42 65L82 101z" />
						<circle cx="135" cy="38" r="38" stroke-dasharray="9 4" />
						<circle cx="135" cy="38" r="28" /><circle cx="135" cy="38" r="12" stroke-width="6" />
						<path d="M59 140h57v101H59z" />
						<path d="M62 190h24l-8 8h16l-10 12 18-14-4-6h16l-18-10-8 8z" fill="#fff" />
						<path d="M121 257h199v71H121zM162 275q-22 2-22 18t22 18h118q18-2 18-18 0-14-22-18" />
						<path d="M62 298v70M52 304v58M44 311v44M36 316v34M28 320v24M20 326v12M62 330h22" stroke="#bbb" />
						{#each cones as [x, y]}<circle cx={x} cy={y} r="13" />{/each}
						<path d="M1112 352l44-14-4 16 142 50-12 33-142-48-12 14z" />
						<g class="yellow">
							{#each barriers as [x, w]}
								<rect {x} y="510" width={w} height="25" transform="rotate(-4 536 523)" />
							{/each}
							<path d="M1132 484l16-4 70-16 100-8v24l12 6v18l-14 4-90 14-78 16-14-6zM1140 484v48M1150 494l22-4 4 24-22 4zM1160 500v10" stroke-width="6" />
							<path d="M1182 476l24-4 6 50-24 4zM1208 478q14 20 12 42M1228 464q-24 36 12 54M1248 462q-22 30 10 56M1256 464l60-4q-8 20 4 40l-60 18M1180 500h30M1180 486l28-2M1184 514l28-2" />
						</g>
						{@render bush(332, 670, 'green')}
						{@render bush(487, 630, 'green')}
						{@render bush(310, -72, 'blue')}
					</g>

					<!-- hatched fence -->
					<g class="fence">
						<path d="M1289 382l8-10 220 186-10 10z" fill="url(#strip)" />
						<path d="M1289 382l11 10-47 51-12-9z" fill="url(#strip-steep)" />
						<path d="M1293 376l217 186M1346 423l5 6M1400 467l6 7M1462 513l-7 9" />
					</g>

					<text class="street" transform="translate(1310 348) rotate(36)">Strada Comunale</text>
					<text class="workers" transform="translate(1465 569) rotate(18)">OPERAI</text>

					<!-- concrete mixer -->
					<g transform="translate(1171 396)" class="cad real">
						<circle r="9" /><circle r="5" /><path d="M0 0v-5M0 0l4 3M0 0l-4 3" />
						<path d="M-10-16l-6 10 6 4M-12-12l-8-1M-18-8l9 5M-20-3l9 5M-22 2l8 5M8 4l8 8M14 2l-2 14M6 9l8 2" />
					</g>

					<!-- crane -->
					<g class="crane">
						<path d="M967 405h10v28h-10zM972 433v188" />
						<path d="M971 433v188M973 433v188" />
						<path d="M967 405l10 14-10 14M977 405l-10 14 10 14M970 407v24M974 407v24M967 412h10M967 426h10" />
						<path d="M957 612h30v29h-30zM963 618h18v17h-18zM965 620h14v13h-14zM967 621l10 11M977 621l-10 11" />
						<path d="M967 635h10v271l-5 6-5-6z" fill="url(#lattice)" />
					</g>

					<path class="booth" d="M1038 649h33v48h-33zM1038 661h33M1038 684h33M1061 661l5 5v14l-5 4M1068 661v23" />

					<!-- site sign board -->
					<g>
						<rect x="1013" y="253" width="109" height="71" rx="2" fill="#14181d" stroke="#c4c6c8" stroke-width="2.400" />
						<path class="cells" d="M1016 255v67M1041 255v67M1067 255v67M1094 255v67M1014 277h80M1014 300h80M1014 255h106" />
						<g fill="#1230d8">
							<circle cx="1029" cy="265" r="10" /><circle cx="1029" cy="289" r="10" />
							<circle cx="1029" cy="312" r="10" /><circle cx="1055" cy="312" r="10" />
						</g>
						<path d="M1021 261q6-2 15 0l1 5-4 3h-2v3h-4v-4q-8 0-6-7zM1022 286q3-4 10-3l5 3v6l-5 3q-7 0-9-3zM1025 305l9-1v7l-4 2v4h-5zM1047 312l5-2-1-4 4 3 9 2v2l-8 1-3 4-1-4z" fill="#fff" />
						<path d="M1046 257l19 8-19 9zM1046 280l19 8-19 9z" fill="#fff5b0" stroke="#fff" />
						<path d="M1049 261v9M1053 263v5M1049 284v9M1053 286v5" stroke="#d8b800" stroke-width="1.5" />
						{#each [[1082, 265], [1082, 288], [1082, 312], [1107, 266]] as [x, y]}
							<circle cx={x} cy={y} r="9" fill="#dff" stroke="#f01010" stroke-width="3" />
							<path d="M{x - 5} {y + 3}l4-9 6 4-2 7z" fill="#222" />
							<path d="M{x + 6} {y - 6}l-12 12" stroke="#f01010" stroke-width="3" />
						{/each}
						<path d="M1104 288v25M1110 280v41M1117 276v44M1097 278v40" stroke="#fff" stroke-width="4" />
					</g>

					<!-- ucs marker -->
					<g class="ucs">
						<path d="M515 890h9v8h-9zM520 894h47M520 894v43" />
						<text x="568" y="890">Y</text>
						<text x="525" y="936">X</text>
					</g>
				</svg>

				<div class="overlay">
					<span class="winctl">
						<button aria-label="Riduci vista">{@render icon('min', 13)}</button>
						<button aria-label="Ripristina vista">{@render icon('restore', 12)}</button>
						<button aria-label="Chiudi vista">{@render icon('close', 12)}</button>
					</span>
					<svg class="cube" width="122" height="116" viewBox="0 0 122 116" role="img" aria-label="Vista ALTO">
						<ellipse cx="61" cy="58" rx="50" ry="46" fill="none" stroke="#474b52" stroke-width="12" />
						<rect x="37" y="36" width="48" height="44" fill="#b2b4b8" />
						<rect x="46" y="44" width="30" height="28" fill="#a0a3ac" />
						<text class="face" transform="translate(58 46) rotate(90)">ALTO</text>
						<text class="pt" transform="translate(55 3) rotate(90)">O</text>
						<text class="pt" transform="translate(108 52) rotate(90)">N</text>
						<text class="pt" transform="translate(55 101) rotate(90)">E</text>
						<text class="pt" transform="translate(2 53) rotate(90)">S</text>
					</svg>
					<button class="wcs">WCS <i></i></button>
					<div class="navbar">
						{#each ['nWheel', 'nHand', 'nZoom', 'nOrbit', 'nShow'] as n}
							<button aria-label={n}>
								<svg width="22" height="22" viewBox="0 0 24 24" aria-hidden="true">{@html icons[n]}</svg>
							</button>
						{/each}
					</div>
				</div>
			</div>
		</div>

		<footer>
			<div class="sheets">
				<button class="active">Modello</button>
				<button>Layout1</button>
				<button>Layout2</button>
				<button>+</button>
			</div>
			<div class="status">
				<button class="model">MODELLO</button>
				{#each status as s}
					<button class:on={s.on} style="width: {s.w}px" aria-label={s.icon}>
						{#if s.icon === 'ratio'}1:1{@render icon('caret', 11)}{:else}{@render icon(s.icon, s.icon === 'caret' ? 12 : 15)}{/if}
					</button>
				{/each}
			</div>
		</footer>
	</div>
</main>

<style>
	:global(body) {
		background: #fff;
		overflow: hidden;
	}

	main {
		padding: 122px 212px 226px;
		font: 500 11px/14px 'Open Sans', 'Noto Sans', sans-serif;
		color: #f1f3f5;
		background:
			linear-gradient(#fff0 974px, #fff 974px) right / 212px 100% no-repeat,
			radial-gradient(ellipse 150px 80px at 1788px 976px, #ededed, #fff0) no-repeat,
			radial-gradient(ellipse 165px 18px at 212px 980px, #e6e6e6, #fff0) no-repeat;
	}

	.window {
		background: #20272f;
		border-top: 1px solid #777c82;
		-webkit-box-reflect: below 0
			linear-gradient(
				to top,
				rgb(0 0 0 / 0.4),
				rgb(0 0 0 / 0.28) 25px,
				rgb(0 0 0 / 0.17) 58px,
				rgb(0 0 0 / 0.1) 88px,
				rgb(0 0 0 / 0.04) 128px,
				transparent 166px
			);
	}

	button,
	select {
		font: inherit;
		color: inherit;
		background: none;
		border: 0;
		padding: 0;
		margin: 0;
		white-space: nowrap;
	}

	button,
	select,
	h1,
	h2,
	li {
		text-shadow: 0 0 1px currentColor;
	}

	select {
		appearance: none;
		flex: 1;
		min-width: 0;
		outline: 0;
	}

	svg {
		display: block;
		flex: none;
	}

	h1,
	h2,
	ul {
		margin: 0;
		padding: 0;
		font: inherit;
		list-style: none;
	}

	header {
		display: flex;
		height: 37px;
		background: #20272f;
	}

	.logo {
		display: flex;
		align-items: center;
		width: 37px;
		height: 33px;
		background: linear-gradient(#9b9b9b, #d0d0d0 50%, #8c8c8c);
	}

	.logo svg + svg {
		filter: brightness(0);
	}

	.bars {
		flex: 1;
	}

	.quickbar {
		display: flex;
		align-items: center;
		height: 16px;
		margin-bottom: 5px;
		padding-left: 9px;
		gap: 6px;
	}

	.quickbar .caret {
		margin: 0 -2px;
	}

	.workspace {
		display: flex;
		align-items: center;
		gap: 3px;
		width: 167px;
		height: 16px;
		padding: 0 1px 0 3px;
		box-sizing: border-box;
		background: #343c4a;
	}

	.winctl {
		display: flex;
		gap: 9px;
		margin-left: auto;
		padding-right: 2px;
	}

	nav {
		display: flex;
		height: 16px;
		gap: 18px;
		padding-left: 6px;
		color: #c3c7cc;
	}

	nav .active {
		width: 43px;
		margin-right: -9px;
		border-radius: 2px 2px 0 0;
		background: #3b4453;
		color: #fff;
	}

	.flyout {
		display: flex;
		align-items: center;
		padding-left: 11px;
	}

	.ribbon {
		display: flex;
		height: 83px;
		background: #222932;
		border-bottom: 3px solid #363f4d;
	}

	.ribbon section {
		display: flex;
		flex-direction: column;
		box-sizing: border-box;
		height: 82px;
		background: #3b4453;
		border-right: 1px solid #262d36;
	}

	.body {
		display: flex;
		height: 66px;
		padding: 3px 0 0 1px;
		box-sizing: border-box;
	}

	h2 {
		display: flex;
		flex: 1;
		align-items: center;
		justify-content: center;
		gap: 3px;
		position: relative;
	}

	.launcher {
		position: absolute;
		right: 2px;
	}

	.big {
		display: flex;
		flex: none;
		flex-direction: column;
		align-items: center;
		width: 42px;
	}

	.big span {
		margin-top: 3px;
	}

	.small {
		display: flex;
		align-items: center;
		gap: 4px;
		height: 20px;
	}

	.drop {
		margin-left: 3px;
	}

	.minis {
		display: flex;
		flex-direction: column;
	}

	.minis button {
		display: flex;
		align-items: center;
		gap: 3px;
		height: 20px;
		padding: 0 2px;
	}

	.minis .lit {
		background: #2c4a66;
		outline: 1px solid #6fb0e8;
		outline-offset: -1px;
	}

	.w-draw { width: 228px; }
	.w-edit { width: 254px; }
	.w-layer { width: 200px; }
	.w-annot { width: 140px; }
	.w-block { width: 155px; }
	.w-props { width: 194px; }
	.w-group { width: 71px; }
	.w-util { width: 83px; }
	.w-clip { width: 81px; }
	.w-view { width: 58px; }

	.w-draw .big:nth-child(3) { width: 64px; }
	.w-draw .minis { padding-left: 4px; }
	.w-annot .big { width: 54px; }
	.w-block .big { width: 49px; }
	.w-util .big { width: 60px; }
	.w-clip .big { width: 58px; }
	.w-view .big { width: 56px; }
	.w-group .minis { padding-left: 5px; }
	.w-block .drop { margin-left: 1px; }

	.edit {
		display: grid;
		grid-template-columns: 62px 75px 92px 20px;
		padding-left: 6px;
		grid-auto-rows: 20px;
	}

	.stack {
		flex-direction: column;
		gap: 3px;
		padding: 4px 2px 0;
	}

	.tools {
		display: flex;
		justify-content: space-between;
		height: 17px;
		padding: 0 3px;
	}

	.combo {
		display: flex;
		align-items: center;
		flex: 1;
		gap: 4px;
		max-height: 18px;
		padding-left: 2px;
		box-sizing: border-box;
		background: linear-gradient(#434d60, #515c70);
		border: 1px solid #252c36;
	}

	.lay {
		padding-left: 4px;
	}

	.swatch {
		width: 12px;
		height: 12px;
		margin-left: 3px;
		background: #fff;
	}

	.swatch.wide {
		width: 15px;
		height: 15px;
		margin: 0 5px 0 9px;
	}

	.rule {
		width: 59px;
		height: 1px;
		background: #fff;
	}

	.rule + select {
		margin-left: -2px;
	}

	.w-props .stack {
		gap: 2px;
		padding-left: 4px;
	}

	.prop {
		display: flex;
		align-items: center;
		gap: 4px;
		height: 18px;
	}

	.work {
		display: flex;
		background: #3a4252;
	}

	aside {
		display: flex;
		flex-direction: column;
		width: 267px;
		flex: none;
		border-left: 1px solid #2b303d;
		box-sizing: border-box;
		color: #000;
	}

	h1 {
		height: 24px;
		padding-left: 14px;
		font-size: 13px;
		line-height: 23px;
		color: #fff;
		background: repeating-linear-gradient(#aaa 0 1px, #2b303d 1px 3px) 5px 7px / 3px 9px no-repeat, #2b303d;
	}

	.palette {
		display: flex;
		gap: 4px;
		padding: 2px 3px 2px 3px;
		height: 40px;
		width: 257px;
		background: #fff;
	}

	.palette button {
		display: flex;
		align-items: center;
		justify-content: center;
		width: 45px;
	}

	.orange { background: #ff9800; }
	.sky { background: #08a5e8; }
	.purple { background: #8b2390; }
	.forest { background: #1d5c1c; }
	.green { background: #33b43f; }

	.rest {
		flex: 1;
		background: #efefef;
	}

	ul {
		display: flex;
		flex: 1;
		flex-direction: column;
		width: 263px;
		margin-bottom: 3px;
		padding-top: 2px;
		border-top: 1px solid #777;
		box-sizing: border-box;
		background: linear-gradient(#fff 40%, #dedede);
	}

	li {
		display: flex;
		align-items: center;
		gap: 4px;
		height: 15px;
		margin-left: 12px;
	}

	li:nth-child(4n) {
		height: 16px;
	}

	.root {
		margin-left: 4px;
	}

	.branch {
		display: flex;
		align-items: center;
		align-self: stretch;
		width: 10px;
		margin-right: -4px;
		border-left: 1px dotted #999;
		background: linear-gradient(90deg, #aaa 1px, transparent 1px) 0 7px / 2px 1px repeat-x;
	}

	li:last-child .branch {
		margin-bottom: 7px;
		background-position: 0 100%;
	}

	.plus {
		width: 7px;
		height: 7px;
		margin-left: -5px;
		flex: none;
		font: bold 9px/6px 'Liberation Mono', monospace;
		text-align: center;
		color: #234;
		background: #fff;
		border: 1px solid #889;
	}

	.sidetabs {
		width: 19px;
		padding-top: 24px;
		flex: none;
	}

	.sidetabs button {
		display: block;
		width: 18px;
		height: 126px;
		writing-mode: vertical-rl;
		transform: rotate(180deg);
		text-align: center;
		color: #c9cdd2;
		background: #2d3441;
		border-top: 1px solid #1e242c;
		border-radius: 3px 0 0 3px;
	}

	.sidetabs button:first-child {
		background: #343c4a;
		color: #fff;
	}

	.canvas {
		position: relative;
		flex: 1;
		background: #20272f;
	}

	.drawing {
		width: 100%;
		height: auto;
	}

	.grid {
		stroke: #262d37;
		fill: none;
	}

	.major {
		stroke: #2f3644;
	}

	.thin,
	.ucs {
		fill: none;
		stroke: #e6e8ea;
	}

	.wall {
		fill: none;
		stroke: #fff;
	}

	.reach,
	.crane {
		fill: none;
		stroke: #d80a0a;
		stroke-width: 1.3px;
	}

	.crane {
		stroke: #f00;
		stroke-width: 1.5px;
	}

	.cad {
		fill: none;
		stroke: #e8eaec;
		stroke-width: 4px;
	}

	.bold {
		stroke: #fff;
		stroke-width: 5px;
	}

	.real {
		stroke-width: 2px;
	}

	.yellow {
		stroke: #ffee00;
	}

	.bush {
		stroke-width: 5px;
	}

	.bush.green {
		stroke: #00f01c;
	}

	.bush.blue {
		stroke: #0000ff;
	}

	.fence {
		fill: none;
		stroke: #e8e8e8;
	}

	.booth {
		fill: none;
		stroke: #ff00ff;
		stroke-width: 1.5px;
	}

	.cells {
		fill: none;
		stroke: #e6e6e6;
		stroke-width: 3px;
	}

	.street {
		font: 26px 'Liberation Sans', sans-serif;
		fill: #fff;
		stroke: #fff;
		stroke-width: 0.8px;
	}

	.workers {
		font: bold 9px 'Liberation Sans', sans-serif;
		fill: #fff;
	}

	.ucs text {
		font: 300 16px 'Open Sans', sans-serif;
		fill: #e6e8ea;
		stroke: none;
	}

	.overlay {
		position: absolute;
		top: 0;
		right: 0;
		display: flex;
		flex-direction: column;
		align-items: flex-end;
		padding: 6px 3px 0 0;
	}

	.overlay .winctl {
		gap: 6px;
		padding-right: 5px;
	}

	.cube {
		margin: 12px 12px 0 0;
	}

	.pt {
		font: bold 16px 'Liberation Sans', sans-serif;
		fill: #c6c8cb;
	}

	.face {
		font: 11px 'Liberation Sans', sans-serif;
		fill: #30343a;
	}

	.wcs {
		display: flex;
		align-items: center;
		justify-content: space-around;
		width: 45px;
		height: 15px;
		margin: 16px 51px 0 0;
		font: 10px 'Liberation Sans', sans-serif;
		color: #33373c;
		background: #95979b;
		border-radius: 3px;
	}

	.wcs i {
		border: 4px solid transparent;
		border-top-color: #b9bbbe;
		border-bottom: 0;
	}

	.navbar {
		display: flex;
		flex-direction: column;
		align-items: center;
		justify-content: space-between;
		width: 30px;
		height: 180px;
		margin-top: 21px;
		padding: 14px 0;
		box-sizing: border-box;
		background: #62666c;
		border: 1px solid #777b80;
		border-radius: 3px;
	}

	.navbar svg {
		fill: none;
		stroke: #3c4046;
		stroke-width: 1.3px;
	}

	footer {
		display: flex;
		justify-content: space-between;
		height: 23px;
		background: #1c232b;
		border-top: 1px solid #2c3341;
		box-sizing: border-box;
	}

	.sheets {
		display: flex;
		gap: 2px;
		padding-left: 15px;
	}

	.sheets button {
		width: 60px;
		height: 15px;
		color: #c3c7cc;
		background: #272e39;
		border-radius: 0 0 6px 6px;
	}

	.sheets button:last-child {
		width: 22px;
	}

	.sheets .active {
		color: #fff;
		font-weight: 700;
		background: #343c4c;
	}

	.status {
		display: flex;
		align-items: center;
		gap: 1px;
		padding-right: 2px;
	}

	.status button {
		display: flex;
		align-items: center;
		justify-content: center;
		height: 20px;
		background: #2a303c;
	}

	.status .model {
		width: 56px;
		margin-right: 2px;
	}

	.status .on {
		background: #4477ad;
	}
</style>
